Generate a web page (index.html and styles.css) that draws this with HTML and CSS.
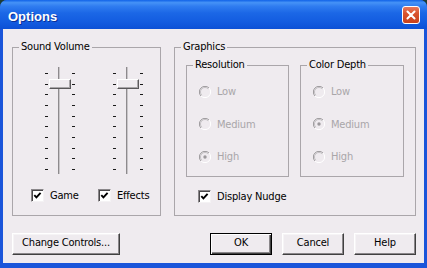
FILE: index.html
```html
<!DOCTYPE html>
<html lang="en">
<head>
<meta charset="utf-8">
<title>Options</title>
<link rel="stylesheet" href="styles.css">
</head>
<body>
<div class="window">
  <div class="titlebar">
    <span class="title">Options</span>
    <button class="close" type="button" aria-label="Close">
      <svg width="18" height="18" viewBox="0 0 18 18"><path d="M5 5 L13 13 M13 5 L5 13" stroke="#fff" stroke-width="2.2" stroke-linecap="round" fill="none"/></svg>
    </button>
  </div>
  <div class="client">
    <div class="groups">
      <fieldset class="group sound">
        <legend>Sound Volume</legend>
        <div class="sliders">
          <div class="slider">
            <div class="ticks"><i></i><i></i><i></i><i></i><i></i><i></i><i></i><i></i><i></i><i></i></div>
            <div class="track"></div>
            <div class="ticks"><i></i><i></i><i></i><i></i><i></i><i></i><i></i><i></i><i></i><i></i></div>
            <div class="thumb"></div>
          </div>
          <div class="slider">
            <div class="ticks"><i></i><i></i><i></i><i></i><i></i><i></i><i></i><i></i><i></i><i></i></div>
            <div class="track"></div>
            <div class="ticks"><i></i><i></i><i></i><i></i><i></i><i></i><i></i><i></i><i></i><i></i></div>
            <div class="thumb"></div>
          </div>
        </div>
        <div class="checks sound-checks">
          <label class="check game"><span class="box"><svg width="9" height="9" viewBox="0 0 9 9"><path d="M1.3 4.2 L3.4 6.4 L7.6 1.8" stroke="#000" stroke-width="1.9" fill="none"/></svg></span>Game</label>
          <label class="check"><span class="box"><svg width="9" height="9" viewBox="0 0 9 9"><path d="M1.3 4.2 L3.4 6.4 L7.6 1.8" stroke="#000" stroke-width="1.9" fill="none"/></svg></span>Effects</label>
        </div>
      </fieldset>
      <fieldset class="group graphics">
        <legend>Graphics</legend>
        <div class="graphics-body">
          <div class="subgroups">
            <fieldset class="group sub res">
              <legend>Resolution</legend>
              <div class="radios">
                <div class="radio"><svg width="12" height="12" viewBox="0 0 12 12"><circle cx="6" cy="6" r="5.5" fill="#efebef"/><path d="M10 2 A5.5 5.5 0 0 0 2 10" stroke="#9c999c" fill="none"/><path d="M2 10 A5.5 5.5 0 0 0 10 2" stroke="#fff" fill="none"/><path d="M9.2 2.8 A4.5 4.5 0 0 0 2.8 9.2" stroke="#c4c1c4" fill="none"/></svg>Low</div>
                <div class="radio"><svg width="12" height="12" viewBox="0 0 12 12"><circle cx="6" cy="6" r="5.5" fill="#efebef"/><path d="M10 2 A5.5 5.5 0 0 0 2 10" stroke="#9c999c" fill="none"/><path d="M2 10 A5.5 5.5 0 0 0 10 2" stroke="#fff" fill="none"/><path d="M9.2 2.8 A4.5 4.5 0 0 0 2.8 9.2" stroke="#c4c1c4" fill="none"/></svg>Medium</div>
                <div class="radio"><svg width="12" height="12" viewBox="0 0 12 12"><circle cx="6" cy="6" r="5.5" fill="#efebef"/><path d="M10 2 A5.5 5.5 0 0 0 2 10" stroke="#9c999c" fill="none"/><path d="M2 10 A5.5 5.5 0 0 0 10 2" stroke="#fff" fill="none"/><path d="M9.2 2.8 A4.5 4.5 0 0 0 2.8 9.2" stroke="#c4c1c4" fill="none"/><circle cx="6" cy="6" r="1.7" fill="#9c999c"/></svg>High</div>
              </div>
            </fieldset>
            <fieldset class="group sub depth">
              <legend>Color Depth</legend>
              <div class="radios">
                <div class="radio"><svg width="12" height="12" viewBox="0 0 12 12"><circle cx="6" cy="6" r="5.5" fill="#efebef"/><path d="M10 2 A5.5 5.5 0 0 0 2 10" stroke="#9c999c" fill="none"/><path d="M2 10 A5.5 5.5 0 0 0 10 2" stroke="#fff" fill="none"/><path d="M9.2 2.8 A4.5 4.5 0 0 0 2.8 9.2" stroke="#c4c1c4" fill="none"/></svg>Low</div>
                <div class="radio"><svg width="12" height="12" viewBox="0 0 12 12"><circle cx="6" cy="6" r="5.5" fill="#efebef"/><path d="M10 2 A5.5 5.5 0 0 0 2 10" stroke="#9c999c" fill="none"/><path d="M2 10 A5.5 5.5 0 0 0 10 2" stroke="#fff" fill="none"/><path d="M9.2 2.8 A4.5 4.5 0 0 0 2.8 9.2" stroke="#c4c1c4" fill="none"/><circle cx="6" cy="6" r="1.7" fill="#9c999c"/></svg>Medium</div>
                <div class="radio"><svg width="12" height="12" viewBox="0 0 12 12"><circle cx="6" cy="6" r="5.5" fill="#efebef"/><path d="M10 2 A5.5 5.5 0 0 0 2 10" stroke="#9c999c" fill="none"/><path d="M2 10 A5.5 5.5 0 0 0 10 2" stroke="#fff" fill="none"/><path d="M9.2 2.8 A4.5 4.5 0 0 0 2.8 9.2" stroke="#c4c1c4" fill="none"/></svg>High</div>
              </div>
            </fieldset>
          </div>
          <div class="checks nudge">
            <label class="check"><span class="box"><svg width="9" height="9" viewBox="0 0 9 9"><path d="M1.3 4.2 L3.4 6.4 L7.6 1.8" stroke="#000" stroke-width="1.9" fill="none"/></svg></span>Display Nudge</label>
          </div>
        </div>
      </fieldset>
    </div>
    <div class="buttons">
      <button class="btn wide" type="button">Change Controls...</button>
      <button class="btn default" type="button">OK</button>
      <button class="btn" type="button">Cancel</button>
      <button class="btn" type="button">Help</button>
    </div>
  </div>
</div>
</body>
</html>
```
FILE: styles.css
```css
* { box-sizing: border-box; }
html, body { margin: 0; padding: 0; }
body {
  width: 427px;
  height: 268px;
  overflow: hidden;
  background: #1f3d35;
  font-family: "DejaVu Sans Condensed", "Liberation Sans", Arial, sans-serif;
  font-size: 11px;
  letter-spacing: -0.2px;
  color: #000;
}
.window {
  width: 427px;
  height: 268px;
  display: flex;
  flex-direction: column;
  background: #1a55da;
  border-radius: 7px 7px 0 0;
  overflow: hidden;
}
.titlebar {
  height: 29px;
  flex: none;
  display: flex;
  justify-content: space-between;
  align-items: flex-start;
  padding: 6px 7px 0 8px;
  background: linear-gradient(to bottom, #1062e8 0%, #4592f6 9%, #2f7cf0 22%, #1b67e6 45%, #135ce0 75%, #0c50d6 100%);
}
.title {
  margin-top: 3px;
  font-family: "Liberation Sans", Arial, sans-serif;
  font-weight: bold;
  font-size: 13px;
  letter-spacing: 0;
  line-height: 15px;
  color: #fff;
  text-shadow: 1px 1px 0 #0a2f96;
}
.close {
  width: 18px;
  height: 18px;
  padding: 0;
  border: 1px solid #fff;
  border-radius: 3px;
  background: linear-gradient(to bottom, #e8785c 0%, #d9542f 40%, #c8401c 100%);
  display: flex;
  align-items: center;
  justify-content: center;
}
.close svg { display: block; }
.client {
  flex: 1;
  margin: 0 3px 5px 3px;
  background: #efebef;
  padding: 11px 8px 0 9px;
  display: flex;
  flex-direction: column;
}
.groups { display: flex; gap: 13px; }
.group {
  margin: 0;
  padding: 0;
  min-width: 0;
  border: 1px solid #aaa6aa;
}
.group > legend {
  margin-left: 6px;
  padding: 0 2px;
  line-height: 14px;
}
.sound { width: 149px; height: 176px; }
.graphics { width: 242px; height: 176px; }
.sliders {
  display: flex;
  gap: 38px;
  margin: 13px 0 0 32px;
}
.slider {
  position: relative;
  display: flex;
  width: 30px;
  height: 107px;
}
.ticks {
  width: 3px;
  display: flex;
  flex-direction: column;
  justify-content: space-between;
  padding: 6px 0 4px;
}
.ticks i {
  display: block;
  width: 3px;
  height: 1px;
  background: #1a1a1a;
}
.track {
  width: 2px;
  margin: 0 12px 0 10px;
  background: linear-gradient(to right, #8d8a8d 50%, #c9c6c9 50%);
}
.thumb {
  position: absolute;
  left: 4px;
  top: 12px;
  width: 22px;
  height: 10px;
  background: #efebef;
  border: 1px solid;
  border-color: #fff #5a585a #5a585a #fff;
  box-shadow: inset -1px -1px 0 #a9a6a9;
}
.checks { display: flex; }
.sound-checks { margin: 15px 0 0 18px; }
.nudge { margin: 13px 0 0 12px; }
.check {
  display: inline-flex;
  align-items: center;
  gap: 6px;
  height: 13px;
  line-height: 13px;
  white-space: nowrap;
}
.check.game { width: 67px; }
.box {
  width: 13px;
  height: 13px;
  flex: none;
  display: flex;
  align-items: center;
  justify-content: center;
  background: #fff;
  border: 1px solid;
  border-color: #8a878a #f4f2f4 #f4f2f4 #8a878a;
  box-shadow: inset 1px 1px 0 #4a484a;
}
.box svg { display: block; }
.graphics-body { padding: 4px 11px 0 11px; }
.subgroups { display: flex; gap: 11px; }
.sub { height: 119px; }
.sub.res { width: 103px; }
.sub.depth { width: 104px; }
.radios {
  display: flex;
  flex-direction: column;
  gap: 19.5px;
  padding: 13px 0 0 12px;
}
.radio {
  display: flex;
  align-items: center;
  gap: 6px;
  height: 13px;
  line-height: 13px;
  color: #a9a6a9;
}
.radio svg { display: block; flex: none; }
.buttons {
  display: flex;
  gap: 10px;
  margin-top: 17px;
}
.btn {
  width: 62px;
  height: 22px;
  padding: 0 0 2px;
  font: inherit;
  letter-spacing: inherit;
  line-height: 18px;
  white-space: nowrap;
  color: #000;
  background: #efebef;
  border: 1px solid;
  border-color: #fff #404040 #404040 #fff;
  box-shadow: inset -1px -1px 0 #8a878a, inset 1px 1px 0 #f6f4f6;
}
.btn.wide { width: 108px; margin-right: auto; }
.btn.default {
  border-color: #000;
  box-shadow: inset 1px 1px 0 #fff, inset -1px -1px 0 #404040, inset -2px -2px 0 #8a878a;
}
```
